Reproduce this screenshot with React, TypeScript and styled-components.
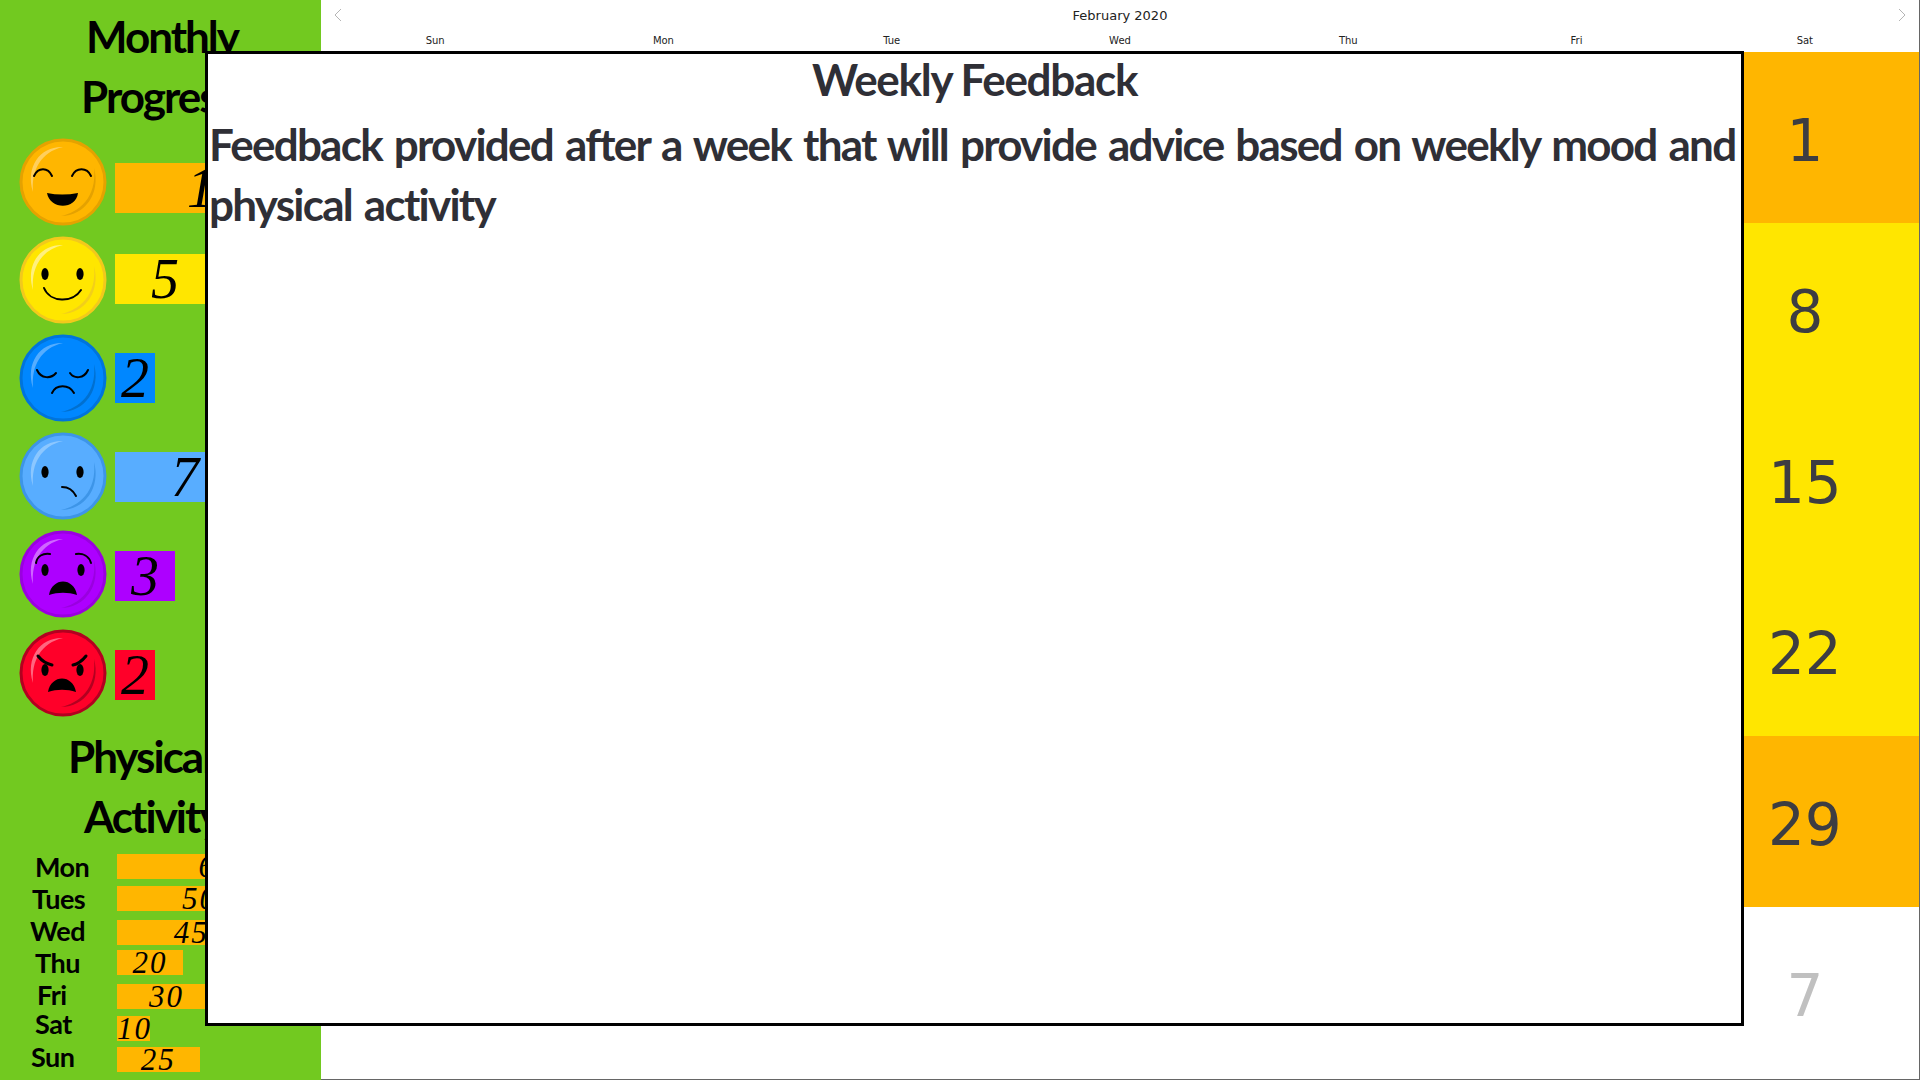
import React from 'react';
import styled, { createGlobalStyle } from 'styled-components';

const HAND = '"Lato", "Liberation Sans", sans-serif';
const SCRIPT = '"Liberation Serif", serif';
const UI = '"DejaVu Sans", sans-serif';

const GlobalStyle = createGlobalStyle`
  html, body {
    margin: 0;
    padding: 0;
    background: #fff;
  }
  * {
    box-sizing: border-box;
  }
`;

const Page = styled.div`
  position: relative;
  width: 1920px;
  height: 1080px;
  display: flex;
  overflow: hidden;
`;

const Sidebar = styled.aside`
  width: 321px;
  height: 1080px;
  flex-shrink: 0;
  background: #72c920;
  padding-top: 6px;
  overflow: hidden;
`;

const SideTitle = styled.h2<{ $left: number; $indent: number }>`
  margin: 0 0 0 ${(p) => p.$left}px;
  width: 200px;
  text-indent: ${(p) => p.$indent}px;
  font-family: ${HAND};
  font-size: 44px;
  font-weight: 700;
  line-height: 60px;
  color: #000;
  white-space: nowrap;
  letter-spacing: -2px;
`;

const MoodList = styled.div`
  display: grid;
  grid-auto-rows: 99px;
  padding-top: 4px;
  margin-bottom: 2px;
`;

const MoodRow = styled.div`
  display: flex;
  align-items: center;
  padding-left: 19px;
  gap: 8px;
`;

const FaceSvg = styled.svg<{ $drop: number }>`
  width: 88px;
  height: 88px;
  flex-shrink: 0;
  margin-top: ${(p) => p.$drop}px;
`;

const MoodBar = styled.div<{ $color: string; $value: number; $drop: number }>`
  width: ${(p) => p.$value * 20}px;
  height: 50px;
  margin-top: ${(p) => p.$drop}px;
  flex-shrink: 0;
  background: ${(p) => p.$color};
  font-family: ${SCRIPT};
  font-style: italic;
  font-size: 56px;
  line-height: 50px;
  text-align: center;
  color: #000;
`;

const ActivityList = styled.div`
  display: flex;
  flex-direction: column;
  margin-top: 8px;
`;

const ActivityRow = styled.div<{ $gap: number }>`
  display: flex;
  align-items: center;
  height: 25px;
  margin-top: ${(p) => p.$gap}px;
`;

const DayName = styled.span<{ $left: number; $lift: number }>`
  width: 117px;
  padding-left: ${(p) => p.$left}px;
  margin-bottom: ${(p) => p.$lift}px;
  font-family: ${HAND};
  font-size: 27px;
  font-weight: 700;
  line-height: 25px;
  letter-spacing: -0.5px;
  color: #000;
  white-space: nowrap;
`;

const ActivityBar = styled.div<{ $value: number }>`
  width: ${(p) => p.$value * 3.3}px;
  height: 25px;
  flex-shrink: 0;
  background: #ffb600;
  font-family: ${SCRIPT};
  font-style: italic;
  font-size: 31px;
  line-height: 25px;
  letter-spacing: 2px;
  text-align: center;
  white-space: nowrap;
  color: #000;
`;

const Calendar = styled.main`
  flex: 1;
  height: 1080px;
  display: flex;
  flex-direction: column;
  border-right: 1px solid #666;
  border-bottom: 1px solid #666;
`;

const MonthBar = styled.div`
  height: 30px;
  padding: 0 12px 0 12px;
  display: flex;
  align-items: center;
  justify-content: space-between;
  font-family: ${UI};
  font-size: 13px;
  color: #222;
`;

const Chevron = styled.svg`
  width: 10px;
  height: 14px;
  fill: none;
  stroke: #b5b5b5;
  stroke-width: 1;
`;

const WeekHead = styled.div`
  height: 22px;
  display: grid;
  grid-template-columns: repeat(7, 1fr);
  font-family: ${UI};
  font-size: 10px;
  line-height: 21px;
  text-align: center;
  color: #222;
`;

const DayGrid = styled.div`
  flex: 1;
  display: grid;
  grid-template-columns: repeat(7, 1fr);
  grid-auto-rows: 171px;
`;

const DayCell = styled.div<{ $bg?: string; $muted?: boolean }>`
  display: flex;
  align-items: center;
  justify-content: center;
  padding-top: 6px;
  background: ${(p) => p.$bg ?? 'transparent'};
  font-family: ${UI};
  font-size: 58px;
  color: ${(p) => (p.$muted ? '#c0c0c0' : '#3d3d42')};
`;

const Modal = styled.section`
  position: absolute;
  left: 205px;
  top: 51px;
  width: 1539px;
  height: 975px;
  background: #fff;
  border: 3px solid #000;
  color: #2f2f36;
  font-family: ${HAND};
  font-weight: 700;
`;

const ModalTitle = styled.h1`
  margin: 0;
  font-size: 44px;
  font-weight: 700;
  line-height: 50px;
  letter-spacing: -1.3px;
  text-align: center;
`;

const ModalText = styled.p`
  margin: 10px 0 0;
  padding-left: 1px;
  font-size: 44px;
  font-weight: 700;
  line-height: 60px;
  letter-spacing: -1.75px;
  word-spacing: 3px;
`;

type Mood = 'happy' | 'smile' | 'tired' | 'unsure' | 'upset' | 'angry';

const moods: {
  mood: Mood;
  count: number;
  color: string;
  rim: string;
  shade: string;
  shine: string;
  faceDrop: number;
  barDrop: number;
}[] = [
  { mood: 'happy', count: 10, color: '#ffb600', rim: '#e5a200', shade: '#e5a200', shine: '#ffcf5c', faceDrop: 4, barDrop: 17 },
  { mood: 'smile', count: 5, color: '#ffe600', rim: '#f2c91c', shade: '#f2cf1a', shine: '#fff07f', faceDrop: 2, barDrop: 1 },
  { mood: 'tired', count: 2, color: '#0087ff', rim: '#0074dc', shade: '#0070d0', shine: '#55adff', faceDrop: 0, barDrop: 1 },
  { mood: 'unsure', count: 7, color: '#58adff', rim: '#3d95e8', shade: '#3d95e8', shine: '#8cc7ff', faceDrop: -2, barDrop: 1 },
  { mood: 'upset', count: 3, color: '#ad00ff', rim: '#9a00e0', shade: '#9a00e0', shine: '#cf66ff', faceDrop: -3, barDrop: 1 },
  { mood: 'angry', count: 2, color: '#ff0029', rim: '#b30020', shade: '#b30020', shine: '#ff6680', faceDrop: -3, barDrop: 1 },
];

const FaceDetails: React.FC<{ mood: Mood }> = ({ mood }) => {
  const line = { fill: 'none', stroke: '#000', strokeWidth: 2, strokeLinecap: 'round' as const };
  switch (mood) {
    case 'happy':
      return (
        <>
          <path d="M15 38 C19 29 29 29 33 38" {...line} />
          <path d="M53 38 C57 29 68 29 72 38" {...line} />
          <path d="M28 55 Q43 58 59 55 C57 72 31 72 28 55 Z" fill="#000" />
        </>
      );
    case 'smile':
      return (
        <>
          <ellipse cx="26" cy="38" rx="3.6" ry="6" fill="#000" />
          <ellipse cx="61" cy="38" rx="3.6" ry="6" fill="#000" />
          <path d="M25 52 C31 67 54 67 62 54" {...line} />
        </>
      );
    case 'tired':
      return (
        <>
          <path d="M18 36 C22 45 32 45 37 39" {...line} />
          <path d="M51 39 C55 45 65 45 69 36" {...line} />
          <path d="M33 59 C37 50 50 50 55 59" {...line} />
        </>
      );
    case 'unsure':
      return (
        <>
          <ellipse cx="26" cy="40" rx="3.6" ry="6" fill="#000" />
          <ellipse cx="61" cy="40" rx="3.6" ry="6" fill="#000" />
          <path d="M43 55 C49 55 54 58 57 64" {...line} />
        </>
      );
    case 'upset':
      return (
        <>
          <path d="M17 33 C18 26 24 23 31 24" {...line} />
          <path d="M57 24 C64 23 70 26 72 33" {...line} />
          <ellipse cx="26" cy="40" rx="3.6" ry="6" fill="#000" />
          <ellipse cx="62" cy="40" rx="3.6" ry="6" fill="#000" />
          <path d="M30 65 C33 47 55 47 58 65 C49 62 39 62 30 65 Z" fill="#000" />
        </>
      );
    default:
      return (
        <>
          <path d="M19 27 C23 32 28 35 33 36" {...line} strokeWidth={3} />
          <path d="M67 27 C63 32 59 35 54 36" {...line} strokeWidth={3} />
          <ellipse cx="26" cy="41" rx="3.6" ry="6" fill="#000" />
          <ellipse cx="61" cy="41" rx="3.6" ry="6" fill="#000" />
          <path d="M29 63 C32 45 54 45 57 63 C48 60 38 60 29 63 Z" fill="#000" />
        </>
      );
  }
};

const Face: React.FC<{ item: (typeof moods)[number] }> = ({ item }) => (
  <FaceSvg viewBox="0 0 88 88" $drop={item.faceDrop}>
    <circle cx="44" cy="44" r="42" fill={item.color} stroke={item.rim} strokeWidth="3" />
    <path d="M44 9 C22 8 6 28 14 54 C12 32 22 14 44 9 Z" fill={item.shine} />
    <path d="M75 30 C82 55 66 78 42 78 C60 74 78 60 75 30 Z" fill={item.shade} />
    <FaceDetails mood={item.mood} />
  </FaceSvg>
);

const activity = [
  { day: 'Mon', value: 60, left: 35, gap: 0, lift: 0 },
  { day: 'Tues', value: 50, left: 32, gap: 7, lift: 0 },
  { day: 'Wed', value: 45, left: 30, gap: 9, lift: 5 },
  { day: 'Thu', value: 20, left: 35, gap: 5, lift: 0 },
  { day: 'Fri', value: 30, left: 37, gap: 9, lift: 5 },
  { day: 'Sat', value: 10, left: 35, gap: 7, lift: 10 },
  { day: 'Sun', value: 25, left: 31, gap: 6, lift: 7 },
];

const weekDays = ['Sun', 'Mon', 'Tue', 'Wed', 'Thu', 'Fri', 'Sat'];

// Feb 2020 as the grid shows it, with the tail of January and the start of March
const days = Array.from({ length: 42 }, (_, i) => {
  const offset = i - 6;
  if (offset < 0) return { label: 26 + i, muted: true };
  if (offset < 29) return { label: offset + 1, muted: false };
  return { label: offset - 28, muted: true };
});

const dayColors: Record<number, string> = {
  1: '#ffb600',
  8: '#ffe600',
  15: '#ffe600',
  22: '#ffe600',
  29: '#ffb600',
};

const App: React.FC = () => (
  <Page>
    <GlobalStyle />
    <Sidebar>
      <SideTitle $left={81} $indent={5}>
        Monthly
        <br />
        Progress
      </SideTitle>
      <MoodList>
        {moods.map((item) => (
          <MoodRow key={item.mood}>
            <Face item={item} />
            <MoodBar $color={item.color} $value={item.count} $drop={item.barDrop}>
              {item.count}
            </MoodBar>
          </MoodRow>
        ))}
      </MoodList>
      <SideTitle $left={68} $indent={0}>
        Physical
        <br />
        &nbsp;&nbsp;Activity
      </SideTitle>
      <ActivityList>
        {activity.map((row) => (
          <ActivityRow key={row.day} $gap={row.gap}>
            <DayName $left={row.left} $lift={row.lift}>
              {row.day}
            </DayName>
            <ActivityBar $value={row.value}>{row.value}</ActivityBar>
          </ActivityRow>
        ))}
      </ActivityList>
    </Sidebar>
    <Calendar>
      <MonthBar>
        <Chevron viewBox="0 0 10 14">
          <path d="M8 1 L2 7 L8 13" />
        </Chevron>
        <span>February 2020</span>
        <Chevron viewBox="0 0 10 14">
          <path d="M2 1 L8 7 L2 13" />
        </Chevron>
      </MonthBar>
      <WeekHead>
        {weekDays.map((d) => (
          <span key={d}>{d}</span>
        ))}
      </WeekHead>
      <DayGrid>
        {days.map((d, i) => (
          <DayCell key={i} $muted={d.muted} $bg={d.muted ? undefined : dayColors[d.label]}>
            {d.label}
          </DayCell>
        ))}
      </DayGrid>
    </Calendar>
    <Modal>
      <ModalTitle>Weekly Feedback</ModalTitle>
      <ModalText>
        Feedback provided after a week that will provide advice based on weekly mood and physical activity
      </ModalText>
    </Modal>
  </Page>
);

export default App;
